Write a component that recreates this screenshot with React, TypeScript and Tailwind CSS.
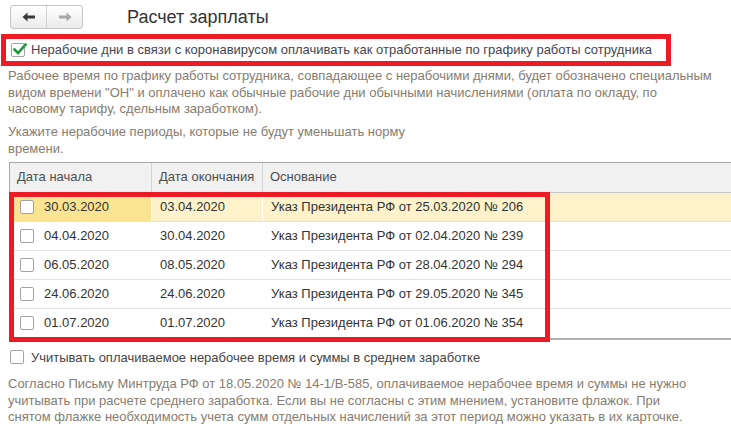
import React from "react";

const rows = [
  { from: "30.03.2020", to: "03.04.2020", basis: "Указ Президента РФ от 25.03.2020 № 206" },
  { from: "04.04.2020", to: "30.04.2020", basis: "Указ Президента РФ от 02.04.2020 № 239" },
  { from: "06.05.2020", to: "08.05.2020", basis: "Указ Президента РФ от 28.04.2020 № 294" },
  { from: "24.06.2020", to: "24.06.2020", basis: "Указ Президента РФ от 29.05.2020 № 345" },
  { from: "01.07.2020", to: "01.07.2020", basis: "Указ Президента РФ от 01.06.2020 № 354" },
];

function Box({ checked = false }: { checked?: boolean }) {
  return (
    <span className="relative flex h-[14px] w-[14px] flex-shrink-0 items-center justify-center rounded-[2px] border border-[#a3a3a3] bg-white">
      {checked && (
        <svg width="16" height="14" viewBox="0 0 16 14" className="absolute left-[0px] top-[-2px]">
          <path d="M2.5 7.5 L6 11 L13.5 2.5" fill="none" stroke="#1f9a3a" strokeWidth="2.6" strokeLinecap="square" />
        </svg>
      )}
    </span>
  );
}

function Arrow({ dir, color }: { dir: "left" | "right"; color: string }) {
  return (
    <svg width="14" height="10" viewBox="0 0 14 10" className={dir === "right" ? "rotate-180" : ""}>
      <path d="M0.5 5 L5.5 0.5 L5.5 3.5 L13 3.5 L13 6.5 L5.5 6.5 L5.5 9.5 Z" fill={color} />
    </svg>
  );
}

export default function App() {
  return (
    <div
      className="relative h-[435px] w-[731px] overflow-hidden bg-white text-[13px]"
      style={{ fontFamily: '"Liberation Sans", Arial, sans-serif' }}
    >
      {/* верхняя панель */}
      <div className="flex items-center pl-[10px] pt-[5px]">
        <div className="flex h-[24px] w-[73px] rounded-[3px] border border-[#c4c4c4] bg-gradient-to-b from-white to-[#ebebeb]">
          <button className="flex w-[36px] items-center justify-center border-r border-[#d0d0d0]">
            <Arrow dir="left" color="#3a3a3a" />
          </button>
          <button className="flex flex-1 items-center justify-center">
            <Arrow dir="right" color="#a8a8a8" />
          </button>
        </div>
        <div className="ml-[44px] text-[18px] leading-[24px] text-[#333]">Расчет зарплаты</div>
      </div>

      {/* основной флажок */}
      <div className="ml-[1px] mt-[5px] flex h-[32px] w-[670px] items-center border-[5px] border-[#ed1c24] pl-[5px]">
        <Box checked />
        <span className="ml-[6px] text-[#454552]">
          Нерабочие дни в связи с коронавирусом оплачивать как отработанные по графику работы сотрудника
        </span>
      </div>

      <p className="mt-[2px] px-[8px] leading-[16.5px] text-[#877c6f]">
        Рабочее время по графику работы сотрудника, совпадающее с нерабочими днями, будет обозначено специальным
        <br />
        видом времени "ОН" и оплачено как обычные рабочие дни обычными начислениями (оплата по окладу, по
        <br />
        часовому тарифу, сдельным заработком).
      </p>

      <p className="mt-[5px] px-[8px] leading-[17px] text-[#877c6f]">
        Укажите нерабочие периоды, которые не будут уменьшать норму
        <br />
        времени.
      </p>

      {/* таблица */}
      <div className="relative ml-[9px] mt-[5px] border-b-2 border-l border-t border-[#a9a9a9] border-b-[#b0b0b0]">
        <div className="grid h-[30px] grid-cols-[142px_111px_1fr] border-b border-[#c8c8c8] bg-[#f1f1f1] text-[#4d4d4d]">
          <div className="flex items-center border-r border-[#d4d4d4] pl-[7px]">Дата начала</div>
          <div className="flex items-center border-r border-[#d4d4d4] pl-[7px]">Дата окончания</div>
          <div className="flex items-center pl-[7px]">Основание</div>
        </div>
        {rows.map((r, i) => (
          <div
            key={r.from}
            className={
              "grid h-[29px] grid-cols-[142px_111px_1fr] text-[#333] " +
              (i < rows.length - 1 ? "border-b border-[#e2e2e2] " : "") +
              (i === 0 ? "bg-[#fdf2c9]" : "bg-white")
            }
          >
            <div
              className={
                "flex items-center pl-[10px] " + (i === 0 ? "border-r border-white bg-[#fbe491]" : "")
              }
            >
              <Box />
              <span className="ml-[10px]">{r.from}</span>
            </div>
            <div className={"flex items-center pl-[8px] " + (i === 0 ? "border-r border-white" : "")}>{r.to}</div>
            <div className="flex items-center pl-[8px]">{r.basis}</div>
          </div>
        ))}
        {/* выделение */}
        <div className="pointer-events-none absolute left-[-1px] top-[29px] h-[150px] w-[541px] border-[5px] border-[#ed1c24]" />
      </div>

      <label className="ml-[10px] mt-[8px] flex items-center text-[#454545]">
        <Box />
        <span className="ml-[7px]">Учитывать оплачиваемое нерабочее время и суммы в среднем заработке</span>
      </label>

      <p className="mt-[9px] px-[8px] leading-[16.5px] text-[#877c6f]">
        Согласно Письму Минтруда РФ от 18.05.2020 № 14-1/В-585, оплачиваемое нерабочее время и суммы не нужно
        <br />
        учитывать при расчете среднего заработка. Если вы не согласны с этим мнением, установите флажок. При
        <br />
        снятом флажке необходимость учета сумм отдельных начислений за этот период можно указать в их карточке.
      </p>
    </div>
  );
}
